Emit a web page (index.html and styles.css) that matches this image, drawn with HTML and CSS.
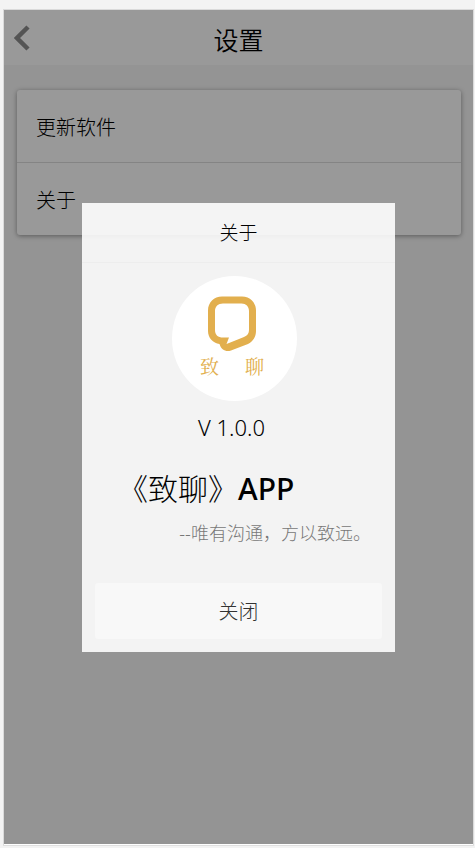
FILE: index.html
```html
<!DOCTYPE html>
<html lang="zh-CN">
<head>
<meta charset="utf-8">
<meta name="viewport" content="width=device-width, initial-scale=1">
<title>设置</title>
<link rel="stylesheet" href="styles.css">
</head>
<body>
<div class="phone">
  <header class="bar">
    <button class="back" type="button" aria-label="返回">
      <svg viewBox="0 0 16 26" width="16" height="26"><path d="M14 2L3 13L14 24" transform="translate(0 0)" fill="none" stroke="#8c8c8c" stroke-width="4.500"/></svg>
    </button>
    <h1 class="bar-title">设置</h1>
  </header>
  <main class="content">
    <nav class="list">
      <a class="item" href="#update">更新软件</a>
      <a class="item" href="#about">关于</a>
    </nav>
  </main>
  <div class="overlay">
    <section class="dialog" id="about" role="dialog" aria-labelledby="about-title">
      <h2 class="dialog-title" id="about-title">关于</h2>
      <div class="about">
        <svg class="logo" viewBox="0 0 125 125">
          <circle cx="62.500" cy="62.500" r="62.500" fill="#fff"/>
          <path fill="#e2af4e" fill-rule="evenodd" d="M50 20.500H70C78 20.500 84 26.500 84 34.500V55C84 61 81 65.500 76 68L59 74.500C54 76.500 49 73.500 47.500 68C41 67 36 62 36 55V34.500C36 26.500 42 20.500 50 20.500zM51 27.500C46 27.500 43 30.500 43 35V54C43 59 46 61.500 51 61.500H57L54.500 68L72 61C75.500 59.500 77 57.500 77 54V35C77 30.500 74 27.500 69.500 27.500z"/>
          <text class="logo-text" x="28" y="98">致</text>
          <text class="logo-text" x="73" y="98">聊</text>
        </svg>
        <p class="version">V 1.0.0</p>
        <h3 class="name">《致聊》<span class="latin">APP</span></h3>
        <p class="slogan">--唯有沟通，方以致远。</p>
      </div>
      <button class="close" type="button">关闭</button>
    </section>
  </div>
</div>
</body>
</html>
```
FILE: styles.css
```css
* {
  box-sizing: border-box;
}

body {
  margin: 0;
  padding: 10px 2px 4px 4px;
  min-height: 100vh;
  display: flex;
  background: #f3f3f3;
  color: #000;
  font-family: "Noto Sans", "Noto Sans CJK SC", sans-serif;
  font-weight: 300;
}

h1, h2, h3, p {
  margin: 0;
  font-weight: 300;
}

button {
  border: 0;
  padding: 0;
  font: inherit;
  color: inherit;
}

.phone {
  position: relative;
  flex: 1;
  background: #f7f7f7;
  box-shadow: 0 1px 0 #fff, 0 0 0 1px #dadada, 0 1px 0 1px #dfdfdf;
}

.bar {
  display: grid;
  grid-template-columns: 40px 1fr 40px;
  align-items: center;
  height: 55px;
  background: #fff;
}

.back {
  display: flex;
  padding-left: 10px;
  background: none;
}

.bar-title {
  padding-top: 4px;
  text-align: center;
  font-size: 25px;
  line-height: 36px;
  font-weight: 350;
}

.content {
  padding: 25px 12px 0 13px;
}

.list {
  border-radius: 3px;
  background: #fff;
  box-shadow: 0 1px 5px rgba(0, 0, 0, .4);
}

.item {
  display: block;
  padding: 4px 19px 0;
  font-size: 20px;
  line-height: 68px;
  color: inherit;
  text-decoration: none;
}

.item + .item {
  border-top: 1px solid #dcdcdc;
}

.overlay {
  position: absolute;
  inset: 0;
  display: flex;
  align-items: center;
  justify-content: center;
  background: rgba(0, 0, 0, .4);
}

.dialog {
  width: 66.7%;
  background: rgba(255, 255, 255, .89);
}

.dialog-title {
  height: 60px;
  border-bottom: 1px solid #ededed;
  text-align: center;
  font-size: 19px;
  line-height: 60px;
}

.about {
  display: flex;
  flex-direction: column;
  align-items: center;
  padding: 13px 24px 38px 13px;
}

.logo {
  width: 125px;
  height: 125px;
  margin-left: 3px;
}

.logo-text {
  font-family: "Noto Serif CJK SC", "Noto Sans CJK SC", serif;
  font-size: 19px;
  font-weight: 400;
  fill: #e2af4e;
}

.version {
  padding-right: 3px;
  font-size: 22px;
  line-height: 52px;
}

.name {
  align-self: flex-start;
  padding-left: 23px;
  font-size: 30px;
  line-height: 72px;
}

.latin {
  font-weight: 500;
}

.slogan {
  align-self: flex-end;
  margin: -4px 0 0;
  font-size: 18px;
  line-height: 24px;
  color: #777;
}

.close {
  display: block;
  width: calc(100% - 26px);
  height: 56px;
  margin: 0 13px 13px;
  border-radius: 3px;
  background: rgba(255, 255, 255, .4);
  font-size: 20px;
  color: #333;
}
```
